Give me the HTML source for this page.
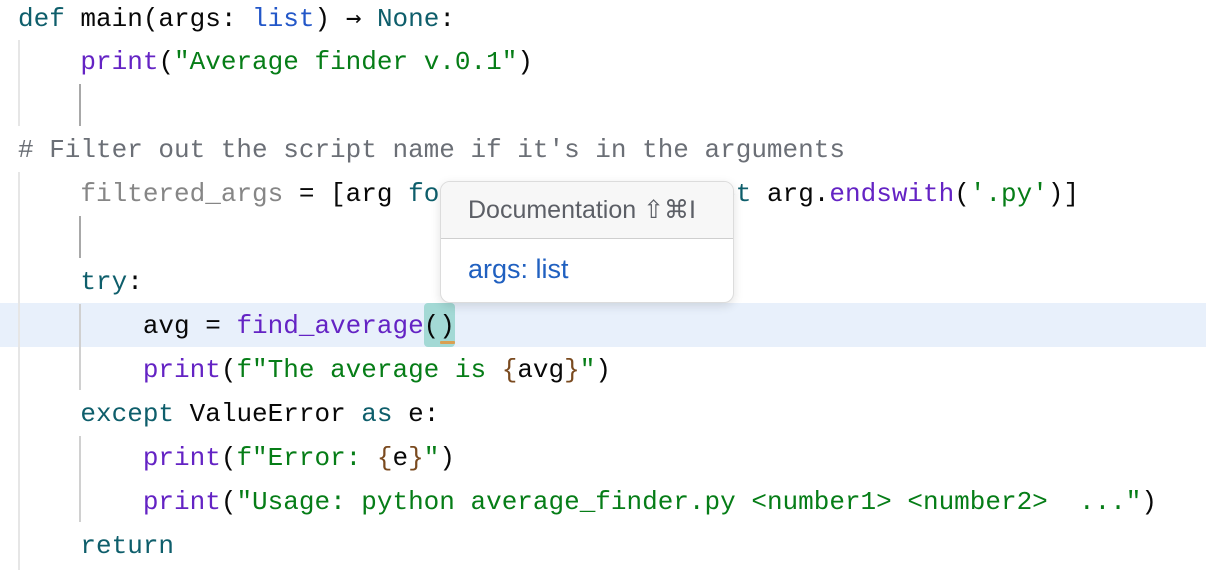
<!DOCTYPE html>
<html><head><style>
html,body{margin:0;padding:0;width:1206px;height:570px;overflow:hidden;background:#fff;}
.l{position:absolute;left:18px;height:44px;line-height:44px;font-family:"Liberation Mono",monospace;font-size:26px;color:#080808;white-space:pre;}
.k{color:#0e5e6b}.f{color:#6423c4}.s{color:#067d17}.b{color:#2357c8}.c{color:#6b6f76}.g{color:#868686}.br{color:#7a4a1f}
.gd{position:absolute;width:2px;background:#e6e6e6}
.gd2{position:absolute;width:2px;background:#a8a8a8}
</style></head><body>
<div style="position:absolute;left:0;top:303px;width:1206px;height:44px;background:#e8f0fb"></div>
<div style="position:absolute;left:424px;top:303px;width:31px;height:44px;background:#a3d9d5;border-radius:4px"></div>
<div style="position:absolute;left:440px;top:341px;width:15px;height:3px;background:#d9a052;border-radius:1px"></div>
<div class="gd" style="left:18px;top:40px;height:86px"></div>
<div class="gd" style="left:18px;top:172px;height:398px"></div>
<div class="gd2" style="left:79px;top:84px;height:42px"></div>
<div class="gd2" style="left:79px;top:216px;height:42px"></div>
<div class="gd" style="left:79px;top:304px;height:86px;background:#d0d0d0"></div>
<div class="gd" style="left:79px;top:436px;height:86px;background:#d0d0d0"></div>
<div class="l" style="top:-4px"><span class="k">def</span> main(args: <span class="b">list</span>) <span style="font-family:'DejaVu Sans Mono',monospace">→</span> <span class="k">None</span>:</div>
<div class="l" style="top:40px">    <span class="f">print</span>(<span class="s">"Average finder v.0.1"</span>)</div>
<div class="l c" style="top:128px"># Filter out the script name if it's in the arguments</div>
<div class="l" style="top:172px">    <span class="g">filtered_args</span> = [arg <span class="k">for</span> arg <span class="k">in</span> args <span class="k">if not</span> arg.<span class="f">endswith</span>(<span class="s">'.py'</span>)]</div>
<div class="l" style="top:260px">    <span class="k">try</span>:</div>
<div class="l" style="top:304px">        avg = <span class="f">find_average</span>()</div>
<div class="l" style="top:348px">        <span class="f">print</span>(<span class="s">f"The average is </span><span class="br">{</span>avg<span class="br">}</span><span class="s">"</span>)</div>
<div class="l" style="top:392px">    <span class="k">except</span> ValueError <span class="k">as</span> e:</div>
<div class="l" style="top:436px">        <span class="f">print</span>(<span class="s">f"Error: </span><span class="br">{</span>e<span class="br">}</span><span class="s">"</span>)</div>
<div class="l" style="top:480px">        <span class="f">print</span>(<span class="s">"Usage: python average_finder.py &lt;number1&gt; &lt;number2&gt;  ..."</span>)</div>
<div class="l" style="top:524px">    <span class="k">return</span></div>
<div style="position:absolute;left:440px;top:181px;width:292px;height:120px;background:#fff;border:1px solid #dcdcdc;border-radius:10px;box-shadow:0 3px 10px rgba(0,0,0,0.12);overflow:hidden;font-family:'Liberation Sans',sans-serif;">
<div style="height:56px;background:#f7f7f7;border-bottom:1px solid #cfcfcf;line-height:56px;padding-left:27px;font-size:25px;color:#5c5f66">Documentation ⇧⌘I</div>
<div style="line-height:60px;padding-left:27px;font-size:27px;color:#2060c0">args: list</div>
</div>
</body></html>
